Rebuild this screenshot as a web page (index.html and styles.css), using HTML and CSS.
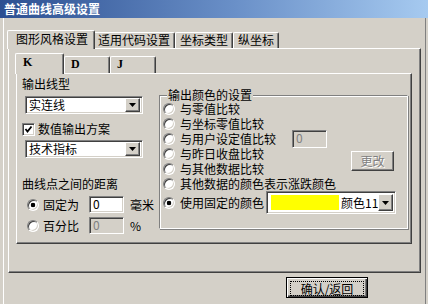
FILE: index.html
```html
<!DOCTYPE html>
<html lang="zh-CN">
<head>
  <meta charset="UTF-8" />
  <title>普通曲线高级设置</title>
  <link rel="stylesheet" href="styles.css">
</head>
<body>
  <div class="window">
    <div class="titlebar">普通曲线高级设置</div>
    <div class="client">
      <div class="tabs outer-tabs">
        <div class="tab active">图形风格设置</div>
        <div class="tab">适用代码设置</div>
        <div class="tab">坐标类型</div>
        <div class="tab">纵坐标</div>
      </div>
      <div class="panel outer-panel">
        <div class="tabs inner-tabs">
          <div class="tab active">K</div>
          <div class="tab">D</div>
          <div class="tab">J</div>
        </div>
        <div class="panel inner-panel">
          <div class="col-left">
            <div class="field-label">输出线型</div>
            <div class="combo select">
              <span class="combo-text">实连线</span>
              <span class="drop-btn"><svg width="7" height="4" viewBox="0 0 7 4"><polygon points="0,0 7,0 3.5,4" fill="#000"/></svg></span>
            </div>
            <label class="check-row">
              <span class="checkbox"><svg width="9" height="9" viewBox="0 0 9 9"><polyline points="1.5,4 3.5,6.5 7.5,1.5" fill="none" stroke="#000" stroke-width="1.8"/></svg></span>
              数值输出方案
            </label>
            <div class="combo select select-2">
              <span class="combo-text">技术指标</span>
              <span class="drop-btn"><svg width="7" height="4" viewBox="0 0 7 4"><polygon points="0,0 7,0 3.5,4" fill="#000"/></svg></span>
            </div>
            <div class="field-label dist-label">曲线点之间的距离</div>
            <div class="dist-row">
              <span class="radio checked"></span>
              <span class="dist-name">固定为</span>
              <span class="textbox">0</span>
              <span class="unit">毫米</span>
            </div>
            <div class="dist-row">
              <span class="radio"></span>
              <span class="dist-name">百分比</span>
              <span class="textbox disabled">0</span>
              <span class="unit">%</span>
            </div>
          </div>

          <fieldset class="group">
            <legend>输出颜色的设置</legend>
            <div class="options">
              <div class="opt r1"><span class="radio"></span>与零值比较</div>
              <div class="opt r2"><span class="radio"></span>与坐标零值比较</div>
              <div class="opt r3"><span class="radio"></span>与用户设定值比较</div>
              <span class="textbox disabled value-box">0</span>
              <div class="opt r4"><span class="radio"></span>与昨日收盘比较</div>
              <button class="btn change-btn" disabled>更改</button>
              <div class="opt r5"><span class="radio"></span>与其他数据比较</div>
              <div class="opt r6"><span class="radio"></span>其他数据的颜色表示涨跌颜色</div>
              <div class="opt r7">
                <span class="radio checked"></span>使用固定的颜色
                <div class="combo color-combo">
                  <span class="swatch"></span>
                  <span class="color-name">颜色11</span>
                  <span class="drop-btn"><svg width="7" height="4" viewBox="0 0 7 4"><polygon points="0,0 7,0 3.5,4" fill="#000"/></svg></span>
                </div>
              </div>
            </div>
          </fieldset>
        </div>
      </div>
      <div class="footer">
        <button class="btn default-btn"><span class="focus">确认/返回</span></button>
      </div>
    </div>
  </div>
</body>
</html>
```

FILE: styles.css
```css
body {
  margin: 0;
}
.window {
  width: 428px;
  height: 304px;
  overflow: hidden;
  background: #d4d0c8;
  font: 12px/16px "Noto Sans CJK SC", sans-serif;
  color: #000;
}
.titlebar {
  height: 18px;
  line-height: 18px;
  padding-left: 4px;
  color: #fff;
  font-weight: bold;
  background: linear-gradient(to right, #2c4f91, #6a90c8 55%, #a6caf0);
}
.client {
  height: 286px;
  box-sizing: border-box;
  margin: 0 2px 0 3px;
  padding: 12px 4px 0 4px;
  border-left: 1px solid #fff;
  border-right: 1px solid #808080;
}

/* tabs */
.tabs {
  display: flex;
  align-items: flex-end;
}
.tab {
  position: relative;
  box-sizing: border-box;
  border: 1px solid #fff;
  border-right-color: #404040;
  border-bottom: none;
  border-radius: 2px 2px 0 0;
  box-shadow: inset -1px 0 #808080;
  background: #d4d0c8;
  white-space: nowrap;
}
.tab.active {
  z-index: 1;
  margin-bottom: -1px;
}
.outer-tabs {
  height: 18px;
}
.outer-tabs .tab {
  height: 16px;
  line-height: 14px;
  padding: 0 4px;
}
.outer-tabs .tab.active {
  height: 19px;
  line-height: 16px;
  padding: 0 6px 0 8px;
  margin-left: -1px;
  margin-right: -2px;
}
.inner-tabs {
  height: 20px;
}
.inner-tabs .tab {
  width: 46px;
  height: 17px;
  padding-left: 6px;
  font: bold 12px/15px "Liberation Serif", serif;
}
.inner-tabs .tab.active {
  width: 49px;
  height: 21px;
  line-height: 17px;
  padding-left: 7px;
  margin-left: -1px;
}

/* panels */
.panel {
  box-sizing: border-box;
  border: 1px solid #fff;
  border-right-color: #404040;
  border-bottom-color: #404040;
  box-shadow: inset -1px -1px #808080;
}
.outer-panel {
  height: 225px;
  padding: 4px 8px 0 7px;
}
.inner-panel {
  display: flex;
  align-items: flex-start;
  height: 171px;
  padding: 2px 3px 0 5px;
}
.col-left {
  width: 137px;
  flex: none;
}
.field-label {
  height: 16px;
}
.dist-label {
  margin-top: 18px;
}

/* sunken fields */
.combo,
.textbox,
.checkbox {
  box-sizing: border-box;
  border: 1px solid #808080;
  border-right-color: #fff;
  border-bottom-color: #fff;
  box-shadow: inset 1px 1px #404040, inset -1px -1px #d4d0c8;
  background: #fff;
}
.combo {
  display: flex;
  align-items: center;
  padding: 2px;
}
.select {
  width: 118px;
  height: 18px;
  margin: 4px 0 0 3px;
}
.select-2 {
  margin-top: 3px;
}
.combo-text {
  flex: 1;
  padding-left: 1px;
  line-height: 14px;
}
.drop-btn {
  display: flex;
  align-items: center;
  justify-content: center;
  box-sizing: border-box;
  width: 15px;
  height: 14px;
  border: 1px solid #fff;
  border-right-color: #404040;
  border-bottom-color: #404040;
  box-shadow: inset -1px -1px #808080, inset 1px 1px #d4d0c8;
  background: #d4d0c8;
}
.check-row {
  display: flex;
  align-items: center;
  gap: 3px;
  height: 16px;
  margin-top: 7px;
}
.checkbox {
  display: flex;
  align-items: center;
  justify-content: center;
  width: 13px;
  height: 13px;
}
.textbox {
  width: 35px;
  height: 17px;
  padding-left: 3px;
  line-height: 14px;
}
.textbox.disabled {
  background: #d4d0c8;
  color: #808080;
}

/* radios */
.radio {
  flex: none;
  box-sizing: border-box;
  width: 12px;
  height: 12px;
  border-radius: 50%;
  border: 1px solid #808080;
  border-right-color: #fff;
  border-bottom-color: #fff;
  box-shadow: inset 1px 1px #404040, inset -1px -1px #d4d0c8;
  background: #fff;
}
.radio.checked {
  background: radial-gradient(circle, #000 0, #000 2px, #fff 2.6px);
}
.dist-row {
  display: flex;
  align-items: center;
  height: 17px;
  margin-top: 4px;
}
.dist-row .radio {
  margin-left: 5px;
}
.dist-name {
  width: 46px;
  margin-left: 4px;
}
.unit {
  margin-left: 6px;
}

/* color group */
.group {
  width: 249px;
  box-sizing: border-box;
  margin: 13px 0 0;
  padding: 0 0 14px 3px;
  border: 1px solid #808080;
  border-right-color: #fff;
  border-bottom-color: #fff;
  box-shadow: inset 1px 1px #fff, 1px 1px #808080;
  min-width: 0;
}
.group legend {
  margin-left: 4px;
  padding: 0 1px;
  line-height: 12px;
  background: #d4d0c8;
}
.options {
  display: grid;
  grid-template-columns: 129px 59px 43px;
  grid-template-rows: repeat(6, 15px) 23px;
  margin-top: 0;
}
.opt {
  grid-column: 1 / -1;
  display: flex;
  align-items: center;
  gap: 5px;
  line-height: 14px;
  white-space: nowrap;
}
.r1 { grid-row: 1; }
.r2 { grid-row: 2; }
.r3 { grid-row: 3; }
.r4 { grid-row: 4; }
.r5 { grid-row: 5; }
.r6 { grid-row: 6; }
.r7 { grid-row: 7; }
.value-box {
  grid-row: 3;
  grid-column: 2;
  align-self: center;
  height: 18px;
  margin: -2px 0;
}
.change-btn {
  grid-row: 4 / 6;
  grid-column: 3;
  align-self: center;
  width: 43px;
  height: 20px;
}
.color-combo {
  width: 130px;
  height: 23px;
  margin-left: -3px;
  padding: 2px 2px 2px 4px;
}
.swatch {
  width: 70px;
  height: 15px;
  background: #ffff00;
}
.color-name {
  flex: 1;
  margin-left: 2px;
  line-height: 16px;
}
.color-combo .drop-btn {
  height: 17px;
}

/* buttons */
.btn {
  box-sizing: border-box;
  padding: 0;
  border: 1px solid #fff;
  border-right-color: #404040;
  border-bottom-color: #404040;
  box-shadow: inset -1px -1px #808080, inset 1px 1px #d4d0c8;
  background: #d4d0c8;
  font: 12px/16px "Noto Sans CJK SC", sans-serif;
  color: #000;
}
.btn:disabled {
  color: #808080;
  text-shadow: 1px 1px #fff;
}
.footer {
  display: flex;
  justify-content: flex-end;
  padding: 4px 53px 0 0;
}
.default-btn {
  width: 82px;
  height: 21px;
  border: 1px solid #000;
  box-shadow: inset 1px 1px #fff, inset -1px -1px #404040, inset -2px -2px #808080;
  padding: 3px;
}
.focus {
  display: block;
  height: 13px;
  line-height: 13px;
  border: 1px dotted #000;
}
```
